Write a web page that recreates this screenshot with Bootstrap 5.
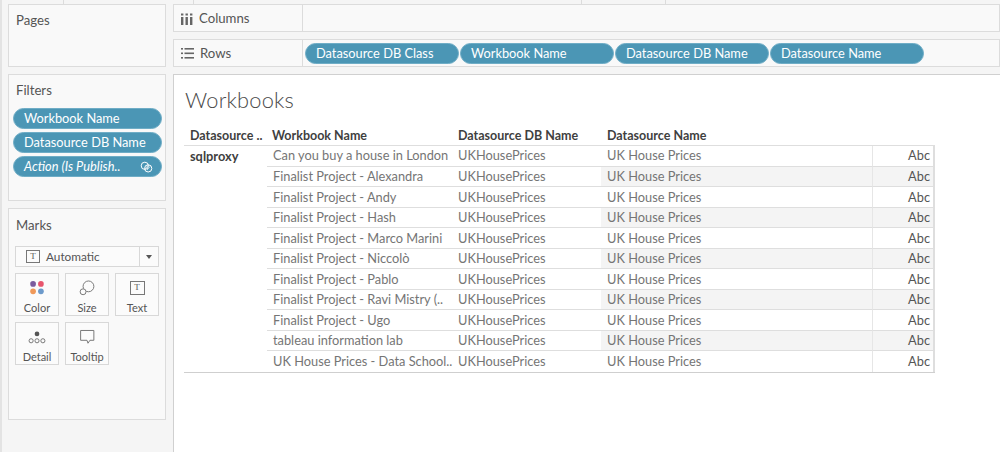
<!DOCTYPE html>
<html lang="en">
<head>
<meta charset="utf-8">
<title>Workbooks</title>
<link href="https://cdn.jsdelivr.net/npm/bootstrap@5.3.0/dist/css/bootstrap.min.css" rel="stylesheet">
<style>
html,body{height:452px;overflow:hidden}
body{background-color:#f5f5f5;background-image:linear-gradient(#dcdcdc,#dcdcdc),linear-gradient(#dcdcdc,#dcdcdc),linear-gradient(#dcdcdc,#dcdcdc),linear-gradient(#dcdcdc,#dcdcdc);background-repeat:no-repeat;background-size:1px 4px;background-position:63px 0,193px 0,581px 0,665px 0;font-family:Lato,"Open Sans",sans-serif;color:#4d4d4d;font-size:12.8px;line-height:1.3}
.stage{width:1000px;height:452px;padding:4px 0 0 8px;gap:7px;position:relative}
.stage::before{content:"";position:absolute;left:0;top:0;bottom:0;width:2px;background:#e3e3e3}
.side{width:158px;gap:7px}
.main{width:827px;gap:7px}
.shelfbox{background:#f9f9f9;border:1px solid #dcdcdc}
.ph{font-size:13.2px;color:#555;padding:7px 0 0 7px;height:27px}
.marks .ph{padding-top:8px}
.pages{height:63px}
.filters{height:127px}
.marks{height:212px}
.pill{background:#4b96b5;color:#fff;border-radius:11px;height:21px;font-size:12.8px;padding-left:10px;border:1px solid #6fadc6;white-space:nowrap}
.pillstack{gap:3px;padding:6px 4px 0 4px}
.pillstack .pill{width:149px}
.markbar{margin:10px 6px 0 6px;height:21px;border:1px solid #d8d8d8;background:#fbfbfb;font-size:11.8px;color:#555}
.markbar .lbl{flex:1;padding-left:10px;gap:6px;border-right:1px solid #d8d8d8;height:100%}
.markbar .arr{width:18px;height:100%}
.caret-d{width:0;height:0;border-left:3.5px solid transparent;border-right:3.5px solid transparent;border-top:4px solid #555}
.tglyph{width:14px;height:13px;border:1px solid #777;font-family:"Liberation Serif",serif;font-size:9px;color:#555}
.tglyph.big{height:14px;width:15px;margin:1px 0}
.cards{display:grid;grid-template-columns:repeat(3,44px);gap:6px;margin:6px 6px 0 6px}
.mcard{height:43px;border:1px solid #d8d8d8;background:#fbfbfb;font-size:11px;color:#555;padding-top:6px;gap:5px}
.mcard svg{height:16px;width:18px}
.colshelf{height:28px}
.shelflabel{width:129px;height:100%;border-right:1px solid #dcdcdc;padding-left:7px;gap:6px;font-size:13.2px;color:#555;flex:none;padding-top:1px}
.rowpills{gap:1.500px;padding-left:2px}
.rowpills .pill{width:153.500px}
.viz{background:#fff;border:1px solid #d0d0d0;border-bottom:0;border-right:0;flex:1;padding:0 0 0 10px;margin-right:-2px}
.vtitle{font-size:21.8px;font-weight:300;color:#4a4a4a;padding:11px 0 0 1px;height:53px;letter-spacing:.2px}
.thead,.tgrid{display:grid;grid-template-columns:83px 186px 148px 272px 62px;width:751px}
.thead{height:18px;border-bottom:1px solid #dedede;font-weight:700;font-size:12.5px;color:#3f3f3f}
.thead div{padding-left:5px;white-space:nowrap}
.thead div:first-child,.thead div:last-child{padding-left:6px}
.thead div:nth-child(4){padding-left:6px}
.tgrid{grid-template-rows:repeat(11,20.55px);border-bottom:1px solid #cfcfcf}
.c0{grid-row:1/span 11;padding:2px 0 0 6px;font-weight:700;color:#3f3f3f}
.tcell{color:#757575;border-bottom:1px solid #dedede;padding-left:6px;white-space:nowrap}
.c2{padding-left:5px}
.c3{padding-left:6px;border-right:1px solid #e6e6e6}
.c4{justify-content:flex-end;padding-right:3px;color:#555;border-right:2px solid #dedede}
.band{background:#f4f4f4}
.tcell.last{border-bottom:0}
</style>
</head>
<body>
<div class="stage d-flex">
  <div class="side d-flex flex-column">
    <div class="shelfbox pages"><div class="ph">Pages</div></div>
    <div class="shelfbox filters">
      <div class="ph">Filters</div>
      <div class="pillstack d-flex flex-column">
        <div class="pill d-flex align-items-center">Workbook Name</div>
        <div class="pill d-flex align-items-center">Datasource DB Name</div>
        <div class="pill d-flex align-items-center justify-content-between fst-italic pe-2">Action (Is Publish..
          <svg width="13" height="12" viewBox="0 0 13 12" fill="none" stroke="#fff" stroke-width="1"><circle cx="4.800" cy="4.800" r="3.600"/><circle cx="8.200" cy="7.400" r="3.600"/><path d="M5 8l3-3.500M7 9l3-3.500" stroke-width=".7"/></svg>
        </div>
      </div>
    </div>
    <div class="shelfbox marks">
      <div class="ph">Marks</div>
      <div class="markbar d-flex align-items-center">
        <div class="lbl d-flex align-items-center"><span class="tglyph d-flex align-items-center justify-content-center">T</span>Automatic</div>
        <div class="arr d-flex align-items-center justify-content-center"><span class="caret-d"></span></div>
      </div>
      <div class="cards">
        <div class="mcard d-flex flex-column align-items-center">
          <svg viewBox="0 0 18 16"><circle cx="5" cy="4" r="2.900" fill="#7b5c9e"/><circle cx="13" cy="4" r="2.900" fill="#e8556d"/><circle cx="5" cy="11.500" r="2.900" fill="#f0995a"/><circle cx="13" cy="11.500" r="2.900" fill="#6d9acb"/></svg>Color</div>
        <div class="mcard d-flex flex-column align-items-center">
          <svg viewBox="0 0 18 16" fill="none" stroke="#777"><circle cx="10.500" cy="6.500" r="5.500"/><circle cx="5" cy="12" r="3" fill="#fbfbfb"/></svg>Size</div>
        <div class="mcard d-flex flex-column align-items-center">
          <span class="tglyph big d-flex align-items-center justify-content-center">T</span>Text</div>
        <div class="mcard d-flex flex-column align-items-center">
          <svg viewBox="0 0 18 16" fill="none" stroke="#777"><circle cx="9" cy="5" r="2.400" fill="#555" stroke="none"/><circle cx="3" cy="12" r="2.100"/><circle cx="9" cy="12" r="2.100"/><circle cx="15" cy="12" r="2.100"/></svg>Detail</div>
        <div class="mcard d-flex flex-column align-items-center">
          <svg viewBox="0 0 18 16" fill="none" stroke="#777"><path d="M2.500 1.500h13.500v10h-4l-2 3-1-3h-6.500z"/></svg>Tooltip</div>
      </div>
    </div>
  </div>
  <div class="main d-flex flex-column">
    <div class="shelfbox colshelf d-flex align-items-center">
      <div class="shelflabel d-flex align-items-center">
        <svg width="12" height="12" viewBox="0 0 12 12" fill="#666"><rect x="0" y="4" width="2.400" height="8"/><rect x="4.500" y="4" width="2.400" height="8"/><rect x="9" y="4" width="2.400" height="8"/><rect x="0" y="0.500" width="2.400" height="2"/><rect x="4.500" y="0.500" width="2.400" height="2"/><rect x="9" y="0.500" width="2.400" height="2"/></svg>
        Columns</div>
    </div>
    <div class="shelfbox colshelf d-flex align-items-center">
      <div class="shelflabel d-flex align-items-center">
        <svg width="13" height="11" viewBox="0 0 13 11" fill="#666"><rect x="0" y="0" width="2" height="1.600"/><rect x="3.500" y="0" width="9.500" height="1.600"/><rect x="0" y="4.500" width="2" height="1.600"/><rect x="3.500" y="4.500" width="9.500" height="1.600"/><rect x="0" y="9" width="2" height="1.600"/><rect x="3.500" y="9" width="9.500" height="1.600"/></svg>
        Rows</div>
      <div class="rowpills d-flex">
        <div class="pill d-flex align-items-center">Datasource DB Class</div>
        <div class="pill d-flex align-items-center">Workbook Name</div>
        <div class="pill d-flex align-items-center">Datasource DB Name</div>
        <div class="pill d-flex align-items-center">Datasource Name</div>
      </div>
    </div>
    <div class="viz">
      <div class="vtitle">Workbooks</div>
      <div class="thead">
        <div>Datasource ..</div><div>Workbook Name</div><div>Datasource DB Name</div><div>Datasource Name</div><div></div>
      </div>
      <div class="tgrid">
        <div class="c0">sqlproxy</div>
        <div class="tcell c1 d-flex align-items-center">Can you buy a house in London</div><div class="tcell c2 d-flex align-items-center">UKHousePrices</div><div class="tcell c3 d-flex align-items-center">UK House Prices</div><div class="tcell c4 d-flex align-items-center">Abc</div>
        <div class="tcell c1 d-flex align-items-center">Finalist Project - Alexandra</div><div class="tcell c2 d-flex align-items-center">UKHousePrices</div><div class="tcell c3 band d-flex align-items-center">UK House Prices</div><div class="tcell c4 band d-flex align-items-center">Abc</div>
        <div class="tcell c1 d-flex align-items-center">Finalist Project - Andy</div><div class="tcell c2 d-flex align-items-center">UKHousePrices</div><div class="tcell c3 d-flex align-items-center">UK House Prices</div><div class="tcell c4 d-flex align-items-center">Abc</div>
        <div class="tcell c1 d-flex align-items-center">Finalist Project - Hash</div><div class="tcell c2 d-flex align-items-center">UKHousePrices</div><div class="tcell c3 band d-flex align-items-center">UK House Prices</div><div class="tcell c4 band d-flex align-items-center">Abc</div>
        <div class="tcell c1 d-flex align-items-center">Finalist Project - Marco Marini</div><div class="tcell c2 d-flex align-items-center">UKHousePrices</div><div class="tcell c3 d-flex align-items-center">UK House Prices</div><div class="tcell c4 d-flex align-items-center">Abc</div>
        <div class="tcell c1 d-flex align-items-center">Finalist Project - Niccolò</div><div class="tcell c2 d-flex align-items-center">UKHousePrices</div><div class="tcell c3 band d-flex align-items-center">UK House Prices</div><div class="tcell c4 band d-flex align-items-center">Abc</div>
        <div class="tcell c1 d-flex align-items-center">Finalist Project - Pablo</div><div class="tcell c2 d-flex align-items-center">UKHousePrices</div><div class="tcell c3 d-flex align-items-center">UK House Prices</div><div class="tcell c4 d-flex align-items-center">Abc</div>
        <div class="tcell c1 d-flex align-items-center">Finalist Project - Ravi Mistry (..</div><div class="tcell c2 d-flex align-items-center">UKHousePrices</div><div class="tcell c3 band d-flex align-items-center">UK House Prices</div><div class="tcell c4 band d-flex align-items-center">Abc</div>
        <div class="tcell c1 d-flex align-items-center">Finalist Project - Ugo</div><div class="tcell c2 d-flex align-items-center">UKHousePrices</div><div class="tcell c3 d-flex align-items-center">UK House Prices</div><div class="tcell c4 d-flex align-items-center">Abc</div>
        <div class="tcell c1 d-flex align-items-center">tableau information lab</div><div class="tcell c2 d-flex align-items-center">UKHousePrices</div><div class="tcell c3 band d-flex align-items-center">UK House Prices</div><div class="tcell c4 band d-flex align-items-center">Abc</div>
        <div class="tcell c1 last d-flex align-items-center">UK House Prices - Data School..</div><div class="tcell c2 last d-flex align-items-center">UKHousePrices</div><div class="tcell c3 last d-flex align-items-center">UK House Prices</div><div class="tcell c4 last d-flex align-items-center">Abc</div>
      </div>
    </div>
  </div>
</div>
<script src="https://cdn.jsdelivr.net/npm/bootstrap@5.3.0/dist/js/bootstrap.bundle.min.js"></script>
</body>
</html>
